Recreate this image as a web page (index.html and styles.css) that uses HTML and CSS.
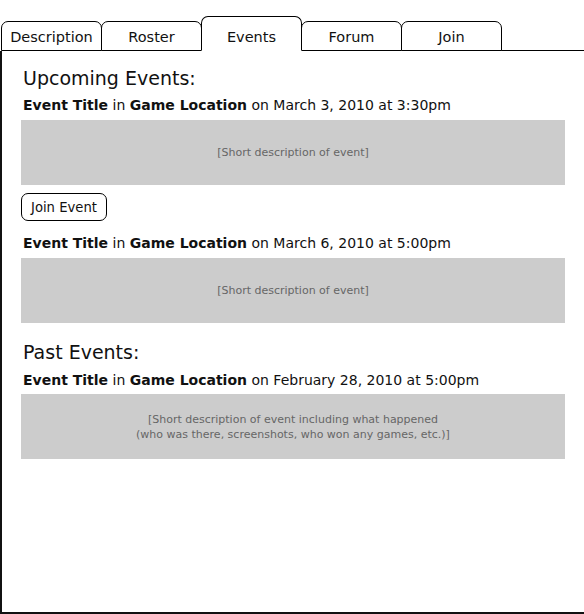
FILE: index.html
```html
<!DOCTYPE html>
<html>
<head>
<meta charset="utf-8">
<link rel="stylesheet" href="styles.css">
</head>
<body>
<div class="tabs">
  <div class="tab">Description</div>
  <div class="tab">Roster</div>
  <div class="tab active">Events</div>
  <div class="tab">Forum</div>
  <div class="tab">Join</div>
  <div class="tab-fill"></div>
</div>
<div class="panel">
  <h2 class="section-title">Upcoming Events:</h2>
  <p class="event-line"><b>Event Title</b> in <b>Game Location</b> on March 3, 2010 at 3:30pm</p>
  <div class="desc">[Short description of event]</div>
  <button class="join-btn">Join Event</button>
  <p class="event-line second"><b>Event Title</b> in <b>Game Location</b> on March 6, 2010 at 5:00pm</p>
  <div class="desc">[Short description of event]</div>

  <h2 class="section-title past">Past Events:</h2>
  <p class="event-line third"><b>Event Title</b> in <b>Game Location</b> on February 28, 2010 at 5:00pm</p>
  <div class="desc">[Short description of event including what happened<br>(who was there, screenshots, who won any games, etc.)]</div>
</div>
</body>
</html>
```
FILE: styles.css
```css
* { box-sizing: border-box; }
html, body { margin: 0; padding: 0; background: #fff; }
body {
  font-family: "DejaVu Sans", "Liberation Sans", sans-serif;
  color: #111;
  width: 584px;
  overflow: hidden;
}
.tabs {
  display: flex;
  align-items: flex-end;
  height: 51px;
  padding-left: 1px;
}
.tab {
  width: 101px;
  height: 30px;
  margin-right: -1px;
  border: 1px solid #000;
  border-radius: 7px 7px 0 0;
  display: flex;
  align-items: center;
  justify-content: center;
  font-size: 14.5px;
  padding-top: 2px;
  background: #fff;
  position: relative;
}
.tab.active {
  height: 35px;
  border-bottom-color: #fff;
  z-index: 1;
  padding-top: 6px;
}
.tab-fill {
  flex: 1;
  border-bottom: 1px solid #000;
}
.panel {
  height: 563px;
  border-left: 2px solid #111;
  border-bottom: 2px solid #111;
  padding: 15px 19px 0 19px;
}
.section-title {
  margin: 0;
  font-size: 19px;
  font-weight: normal;
  line-height: 24px;
  padding-left: 2px;
}
.section-title.past { margin-top: 17px; }
.event-line {
  margin: 6px 0 6px;
  font-size: 14px;
  line-height: 18px;
  padding-left: 2px;
  white-space: nowrap;
}
.event-line b { font-weight: bold; }
.event-line.second { margin-top: 13px; }
.event-line.third { margin-top: 7px; margin-bottom: 5px; }
.desc {
  background: #cccccc;
  height: 65px;
  display: flex;
  align-items: center;
  justify-content: center;
  text-align: center;
  font-size: 11px;
  line-height: 15px;
  color: #666;
}
.join-btn {
  margin-top: 8px;
  height: 28px;
  padding: 0 9px;
  border: 1px solid #000;
  border-radius: 7px;
  background: #fff;
  font-family: inherit;
  font-size: 13.2px;
  color: #111;
  display: block;
}
```
